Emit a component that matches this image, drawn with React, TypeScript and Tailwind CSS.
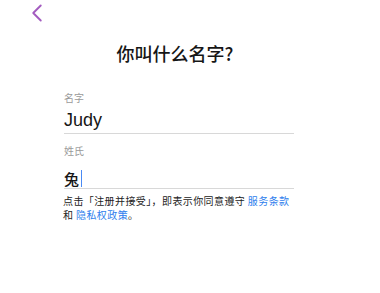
import { ChevronLeft } from 'lucide-react'

const font = { fontFamily: '"Noto Sans CJK SC", "Liberation Sans", sans-serif' }

export default function App() {
  return (
    <div className="w-[380px] h-[293px] bg-white" style={font}>
      {/* 返回 */}
      <div className="h-[28px] pl-[22px] -mt-[2px]">
        <ChevronLeft className="w-[30px] h-[30px] text-[#a35bbf]" strokeWidth={1.5} />
      </div>
      <h1 className="text-center pr-[30px] text-[18px] leading-[24px] font-medium text-[#161616] mt-[15px]">你叫什么名字?</h1>

      <div className="ml-[64px] w-[230px] mt-[27px]">
        <div className="text-[10px] leading-[12px] text-[#9a9a9a]">名字</div>
        <div
          className="mt-[5px] pb-[2px] border-b border-[#d8d8d8] text-[18px] leading-[22px] font-medium text-[#161616]"
          style={{ fontFamily: '"Liberation Sans", sans-serif' }}
        >
          Judy
        </div>

        <div className="mt-[11px] text-[10px] leading-[12px] text-[#9a9a9a]">姓氏</div>
        <div className="mt-[13px] pb-[1px] border-b border-[#d8d8d8] text-[15px] leading-[16px] font-medium text-[#161616] flex items-center">
          兔<span className="inline-block w-[1px] h-[17px] bg-[#4a8af4] ml-[2px]" />
        </div>

        <p className="mt-[5px] text-[10px] leading-[14px] text-[#222] -ml-[1px] whitespace-nowrap tracking-[0.4px]">
          点击「注册并接受」，即表示你同意遵守 <span className="text-[#2f80ed]">服务条款</span>
          <br />和 <span className="text-[#2f80ed]">隐私权政策</span>。
        </p>
      </div>
    </div>
  )
}
